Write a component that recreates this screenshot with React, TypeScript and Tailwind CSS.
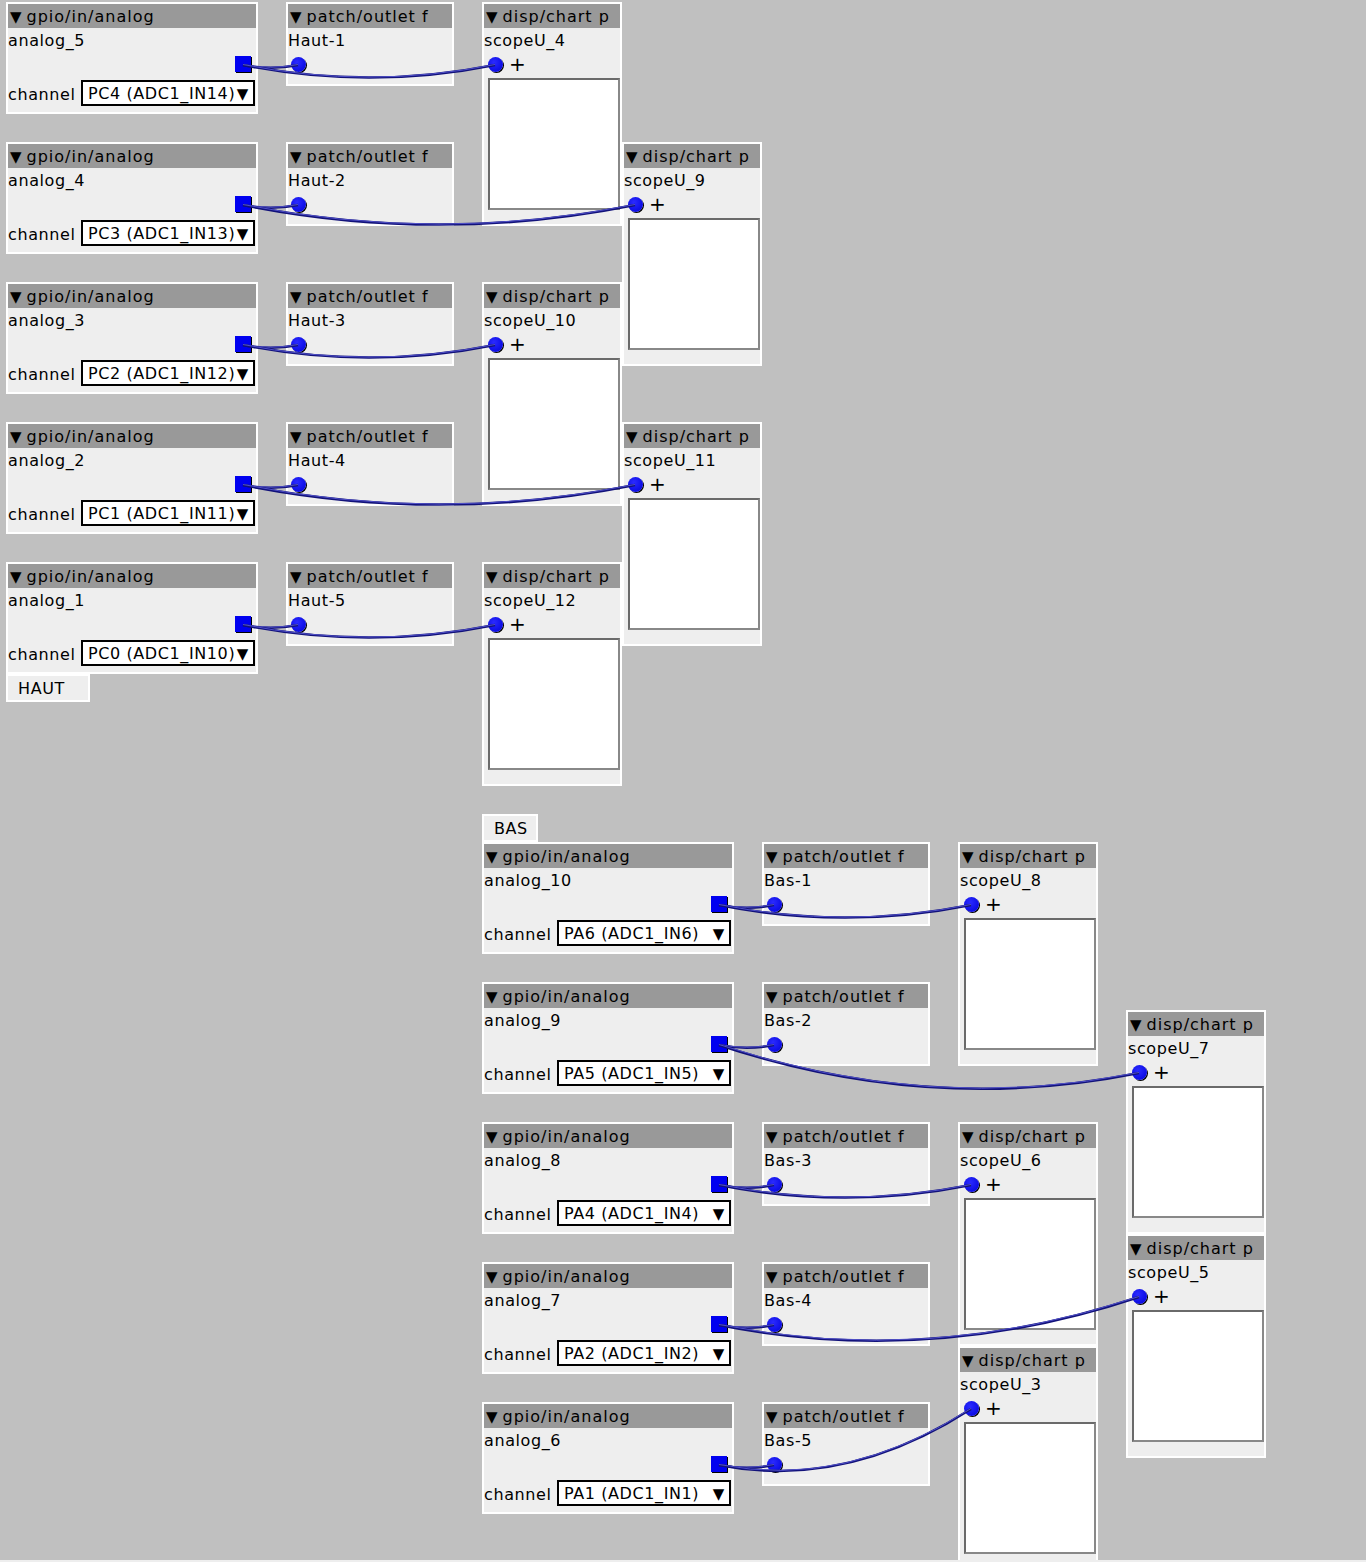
import { FC } from "react";

type Pt = { x: number; y: number };

const font = "font-['DejaVu_Sans','Liberation_Sans',sans-serif] text-[16px] tracking-[0.6px] leading-none";

const gpioTop = [
    { y: 2, name: "analog_5", ch: "PC4 (ADC1_IN14)" },
    { y: 142, name: "analog_4", ch: "PC3 (ADC1_IN13)" },
    { y: 282, name: "analog_3", ch: "PC2 (ADC1_IN12)" },
    { y: 422, name: "analog_2", ch: "PC1 (ADC1_IN11)" },
    { y: 562, name: "analog_1", ch: "PC0 (ADC1_IN10)" },
];

const gpioBottom = [
    { y: 842, name: "analog_10", ch: "PA6 (ADC1_IN6)" },
    { y: 982, name: "analog_9", ch: "PA5 (ADC1_IN5)" },
    { y: 1122, name: "analog_8", ch: "PA4 (ADC1_IN4)" },
    { y: 1262, name: "analog_7", ch: "PA2 (ADC1_IN2)" },
    { y: 1402, name: "analog_6", ch: "PA1 (ADC1_IN1)" },
];

const scopesTop = [
    { x: 482, y: 2, name: "scopeU_4" },
    { x: 622, y: 142, name: "scopeU_9" },
    { x: 482, y: 282, name: "scopeU_10" },
    { x: 622, y: 422, name: "scopeU_11" },
    { x: 482, y: 562, name: "scopeU_12" },
];

const scopesBottom = [
    { x: 958, y: 842, name: "scopeU_8" },
    { x: 1126, y: 1010, name: "scopeU_7" },
    { x: 958, y: 1122, name: "scopeU_6" },
    { x: 1126, y: 1234, name: "scopeU_5" },
    { x: 958, y: 1346, name: "scopeU_3" },
];

const Header: FC<{ title: string }> = ({ title }) => (
    <div className="h-6 bg-[#999999] flex items-center pl-[2px] pt-[2px] whitespace-nowrap overflow-hidden tracking-[1px]">
        <span className="text-[15px] mr-[4px]">▼</span>
        <span>{title}</span>
    </div>
);

const Outlet = () => (
    <div className="w-4 h-4 bg-[#0000f0] shadow-[1px_1px_0_#000]" />
);

const Inlet = () => (
    <div className="w-[15px] h-[15px] rounded-full bg-[radial-gradient(circle_at_40%_35%,#2a2aff,#0000d8)] shadow-[1px_1px_0_#000]" />
);

const GpioNode: FC<{ x: number; y: number; name: string; ch: string }> = ({ x, y, name, ch }) => (
    <div className={`absolute w-[252px] h-[112px] border-2 border-white bg-[#eeeeee] flex flex-col ${font}`} style={{ left: x, top: y }}>
        <Header title="gpio/in/analog" />
        <div className="h-[22px] flex items-center pt-[3px]">{name}</div>
        <div className="h-7 flex items-center justify-end pr-[5px]">
            <Outlet />
        </div>
        <div className="h-[26px] mt-[2px] flex items-center">
            <span className="w-[73px] pt-[3px]">channel</span>
            <div className="w-[174px] h-[26px] border-2 border-black bg-white flex items-center justify-between pl-[5px] pr-[4px] pt-[2px] whitespace-nowrap">
                <span>{ch}</span>
                <span className="text-[15px]">▼</span>
            </div>
        </div>
    </div>
);

const OutletNode: FC<{ x: number; y: number; name: string }> = ({ x, y, name }) => (
    <div className={`absolute w-[168px] h-[84px] border-2 border-white bg-[#eeeeee] flex flex-col ${font}`} style={{ left: x, top: y }}>
        <Header title="patch/outlet f" />
        <div className="h-[22px] flex items-center pt-[3px]">{name}</div>
        <div className="h-7 flex items-center pl-[3px]">
            <Inlet />
        </div>
    </div>
);

const ScopeNode: FC<{ x: number; y: number; name: string }> = ({ x, y, name }) => (
    <div className={`absolute w-[140px] h-[224px] border-2 border-white bg-[#eeeeee] flex flex-col ${font}`} style={{ left: x, top: y }}>
        <Header title="disp/chart p" />
        <div className="h-[22px] flex items-center pt-[3px]">{name}</div>
        <div className="h-7 flex items-center pl-[4px] gap-[6px]">
            <Inlet />
            <span className="text-[20px] leading-none">+</span>
        </div>
        <div className="ml-1 w-[132px] h-[132px] bg-white border-2 border-t-[#6a6a6a] border-l-[#6a6a6a] border-r-[#888888] border-b-[#888888]" />
    </div>
);

const Label: FC<{ x: number; y: number; w: number; text: string }> = ({ x, y, w, text }) => (
    <div className={`absolute h-7 border-2 border-white bg-[#eeeeee] flex items-center pl-[10px] pt-[2px] ${font}`} style={{ left: x, top: y, width: w }}>
        {text}
    </div>
);

const wirePath = (a: Pt, b: Pt) => {
    const cx = (a.x + b.x) / 2;
    const cy = Math.max(a.y, b.y) + 0.1 * Math.abs(b.x - a.x);
    return `M${a.x} ${a.y} Q${cx} ${cy} ${b.x} ${b.y}`;
};

export default function App() {
    const wires: [Pt, Pt][] = [];
    gpioTop.forEach((g, i) => {
        const out = { x: 243, y: g.y + 63 };
        wires.push([out, { x: 298, y: g.y + 63 }]);
        wires.push([out, { x: scopesTop[i].x + 13, y: scopesTop[i].y + 63 }]);
    });
    gpioBottom.forEach((g, i) => {
        const out = { x: 719, y: g.y + 63 };
        wires.push([out, { x: 774, y: g.y + 63 }]);
        wires.push([out, { x: scopesBottom[i].x + 13, y: scopesBottom[i].y + 63 }]);
    });

    return (
        <div className="w-[1366px] h-[1562px] bg-[#eeeeee] text-black">
            <div className="relative w-[1366px] h-[1560px] bg-[#c0c0c0] overflow-hidden">
                {gpioTop.map((g) => (
                    <GpioNode key={g.name} x={6} y={g.y} name={g.name} ch={g.ch} />
                ))}
                {gpioTop.map((g, i) => (
                    <OutletNode key={"h" + i} x={286} y={g.y} name={`Haut-${i + 1}`} />
                ))}
                {scopesTop.map((s) => (
                    <ScopeNode key={s.name} x={s.x} y={s.y} name={s.name} />
                ))}
                <Label x={6} y={674} w={84} text="HAUT" />

                <Label x={482} y={814} w={56} text="BAS" />
                {gpioBottom.map((g) => (
                    <GpioNode key={g.name} x={482} y={g.y} name={g.name} ch={g.ch} />
                ))}
                {gpioBottom.map((g, i) => (
                    <OutletNode key={"b" + i} x={762} y={g.y} name={`Bas-${i + 1}`} />
                ))}
                {scopesBottom.map((s) => (
                    <ScopeNode key={s.name} x={s.x} y={s.y} name={s.name} />
                ))}

                <svg className="absolute inset-0 pointer-events-none" width={1366} height={1560}>
                    {wires.map(([a, b], i) => (
                        <g key={i}>
                            <path d={wirePath(a, b)} fill="none" stroke="#12127a" strokeWidth={2.5} />
                            <path d={wirePath(a, b)} fill="none" stroke="#5050c8" strokeWidth={1} transform="translate(0,-0.5)" />
                        </g>
                    ))}
                </svg>
            </div>
        </div>
    );
}
